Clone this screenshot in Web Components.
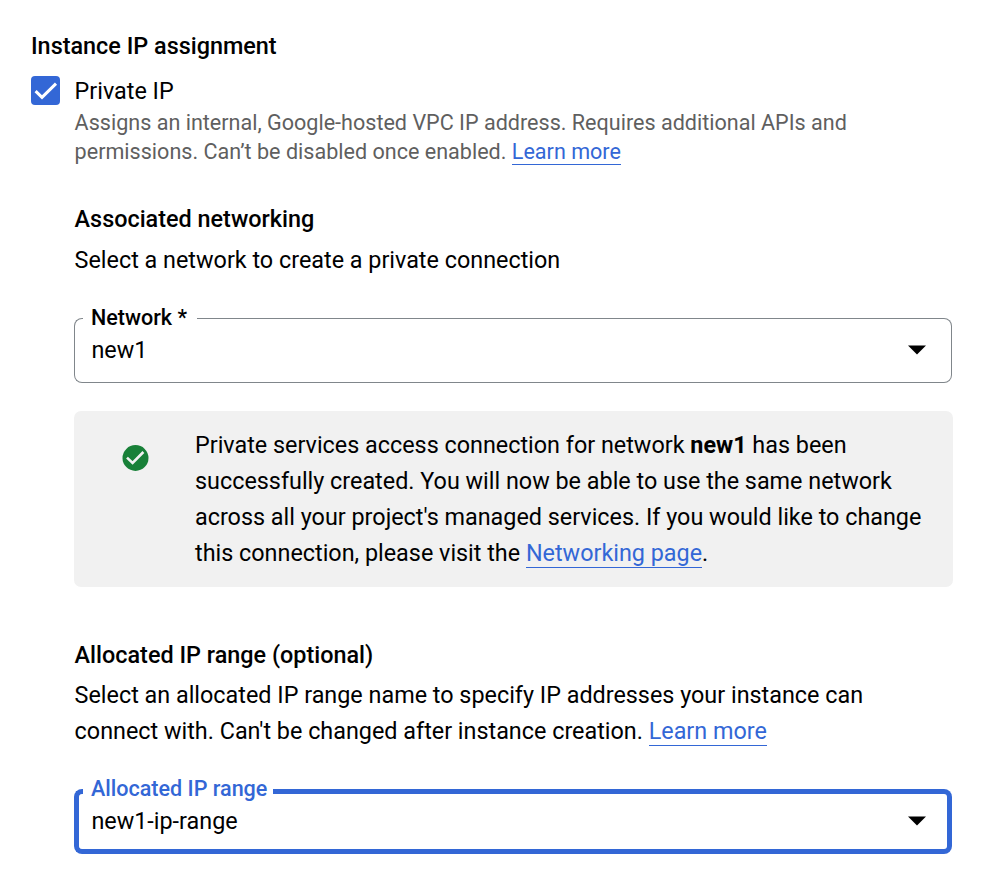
<!DOCTYPE html>
<html lang="en">
<head>
<meta charset="utf-8">
<title>Instance IP assignment</title>
<style>
  body { margin: 0; background: #fff; color: #000; font-family: Roboto, "Liberation Sans", sans-serif; }
</style>
</head>
<body>
<ip-page></ip-page>
<script>
const define = (name, html) => customElements.define(name, class extends HTMLElement {
  constructor() {
    super();
    this.attachShadow({ mode: 'open' }).innerHTML = html;
  }
});

define('text-link', `
<style>
  :host { display: inline; }
  a { color: #3367d6; text-decoration: none; border-bottom: 1px solid #3367d6; }
</style>
<a><slot></slot></a>`);

define('section-title', `
<style>
  :host { display: block; }
  h2 { margin: 0; font-size: 23.4px; line-height: 36px; font-weight: 500; }
</style>
<h2><slot></slot></h2>`);

define('body-text', `
<style>
  :host { display: block; font-size: 23.37px; line-height: 36px; }
</style>
<slot></slot>`);

define('check-option', `
<style>
  :host { display: grid; grid-template-columns: 29px 1fr; column-gap: 14.6px; }
  .box { width: 29px; height: 29px; border-radius: 4px; background: #3367d6; margin-top: 3px; }
  svg { display: block; }
  .label { font-size: 23.37px; line-height: 36px; }
  .hint { font-size: 21.57px; line-height: 29px; color: #5f5f5f; margin-top: -1px; }
</style>
<div class="box"><svg width="29" height="29" viewBox="0 0 29 29"><path d="M4.6 15.2 11 21.4 25 7.6" fill="none" stroke="#fff" stroke-width="3"/></svg></div>
<div><div class="label"><slot name="label"></slot></div><div class="hint"><slot></slot></div></div>`);

define('select-field', `
<style>
  :host { display: flex; position: relative; height: 65px; width: 878px; --c: #80868b; --w: 1px; --label: #000; --notch: 114px; }
  :host([focused]) { --c: #3367d6; --w: 5px; --label: #3367d6; --notch: 190px; }
  .start, .notch, .end { box-sizing: border-box; border: var(--w) solid var(--c); }
  .start { width: 9px; border-right: 0; border-radius: 8px 0 0 8px; }
  .notch { width: var(--notch); border-left: 0; border-right: 0; border-top: 0; }
  .end { flex: 1; border-left: 0; border-radius: 0 8px 8px 0; }
  .label { position: absolute; left: 17px; top: -15px; font-size: 21.55px; line-height: 29px; font-weight: 500; color: var(--label); white-space: nowrap; }
  .value { position: absolute; left: 17.4px; top: 14px; font-size: 23.37px; line-height: 36px; }
  svg { position: absolute; left: 834px; top: 27px; }
</style>
<div class="start"></div><div class="notch"></div><div class="end"></div>
<div class="label"><slot name="label"></slot></div>
<div class="value"><slot></slot></div>
<svg width="18" height="10" viewBox="0 0 18 10"><path d="M0 .4H18L9 9.4Z" fill="#000"/></svg>`);

define('success-notice', `
<style>
  :host { display: grid; grid-template-columns: 121px 1fr; box-sizing: border-box; width: 879px; height: 176px; padding-top: 16px; background: #f1f1f1; border-radius: 7px; }
  svg { display: block; margin: 18px 0 0 48px; }
</style>
<svg width="27" height="26" viewBox="0 0 27 26"><ellipse cx="13.5" cy="13" rx="13" ry="12.9" fill="#188038"/><path d="M5 12.6 10.6 17.9 21.4 7" fill="none" stroke="#f1f1f1" stroke-width="2.6"/></svg>
<slot></slot>`);

define('ip-page', `
<style>
  :host { display: flex; flex-direction: column; box-sizing: border-box; width: 988px; height: 896px; padding: 28px 0 0 31px; overflow: hidden; }
  check-option { margin-top: 9px; }
  .inner { padding-left: 43px; display: flex; flex-direction: column; }
  .assoc { margin-top: 35px; }
  .desc { margin-top: 5px; }
  .net { margin-top: 40px; }
  success-notice { margin-top: 28px; }
  .alloc { margin-top: 50px; }
  .range { margin-top: 40px; }
  .adesc { margin-top: 4px; }
  b { font-weight: 700; }
  .inset { margin-left: 0.6px; }
</style>
<section-title>Instance IP assignment</section-title>
<check-option><span slot="label">Private IP</span>Assigns an internal, Google-hosted VPC IP address. Requires additional APIs and<br>permissions. Can’t be disabled once enabled. <text-link>Learn more</text-link></check-option>
<div class="inner">
  <section-title class="assoc inset">Associated networking</section-title>
  <body-text class="desc inset">Select a network to create a private connection</body-text>
  <select-field class="net"><span slot="label">Network *</span>new1</select-field>
  <success-notice><body-text>Private services access connection for network <b>new1</b> has been<br>successfully created. You will now be able to use the same network<br>across all your project's managed services. If you would like to change<br>this connection, please visit the <text-link>Networking page</text-link>.</body-text></success-notice>
  <section-title class="alloc inset">Allocated IP range (optional)</section-title>
  <body-text class="adesc inset">Select an allocated IP range name to specify IP addresses your instance can<br>connect with. Can't be changed after instance creation. <text-link>Learn more</text-link></body-text>
  <select-field class="range" focused><span slot="label">Allocated IP range</span>new1-ip-range</select-field>
</div>`);
</script>
</body>
</html>
